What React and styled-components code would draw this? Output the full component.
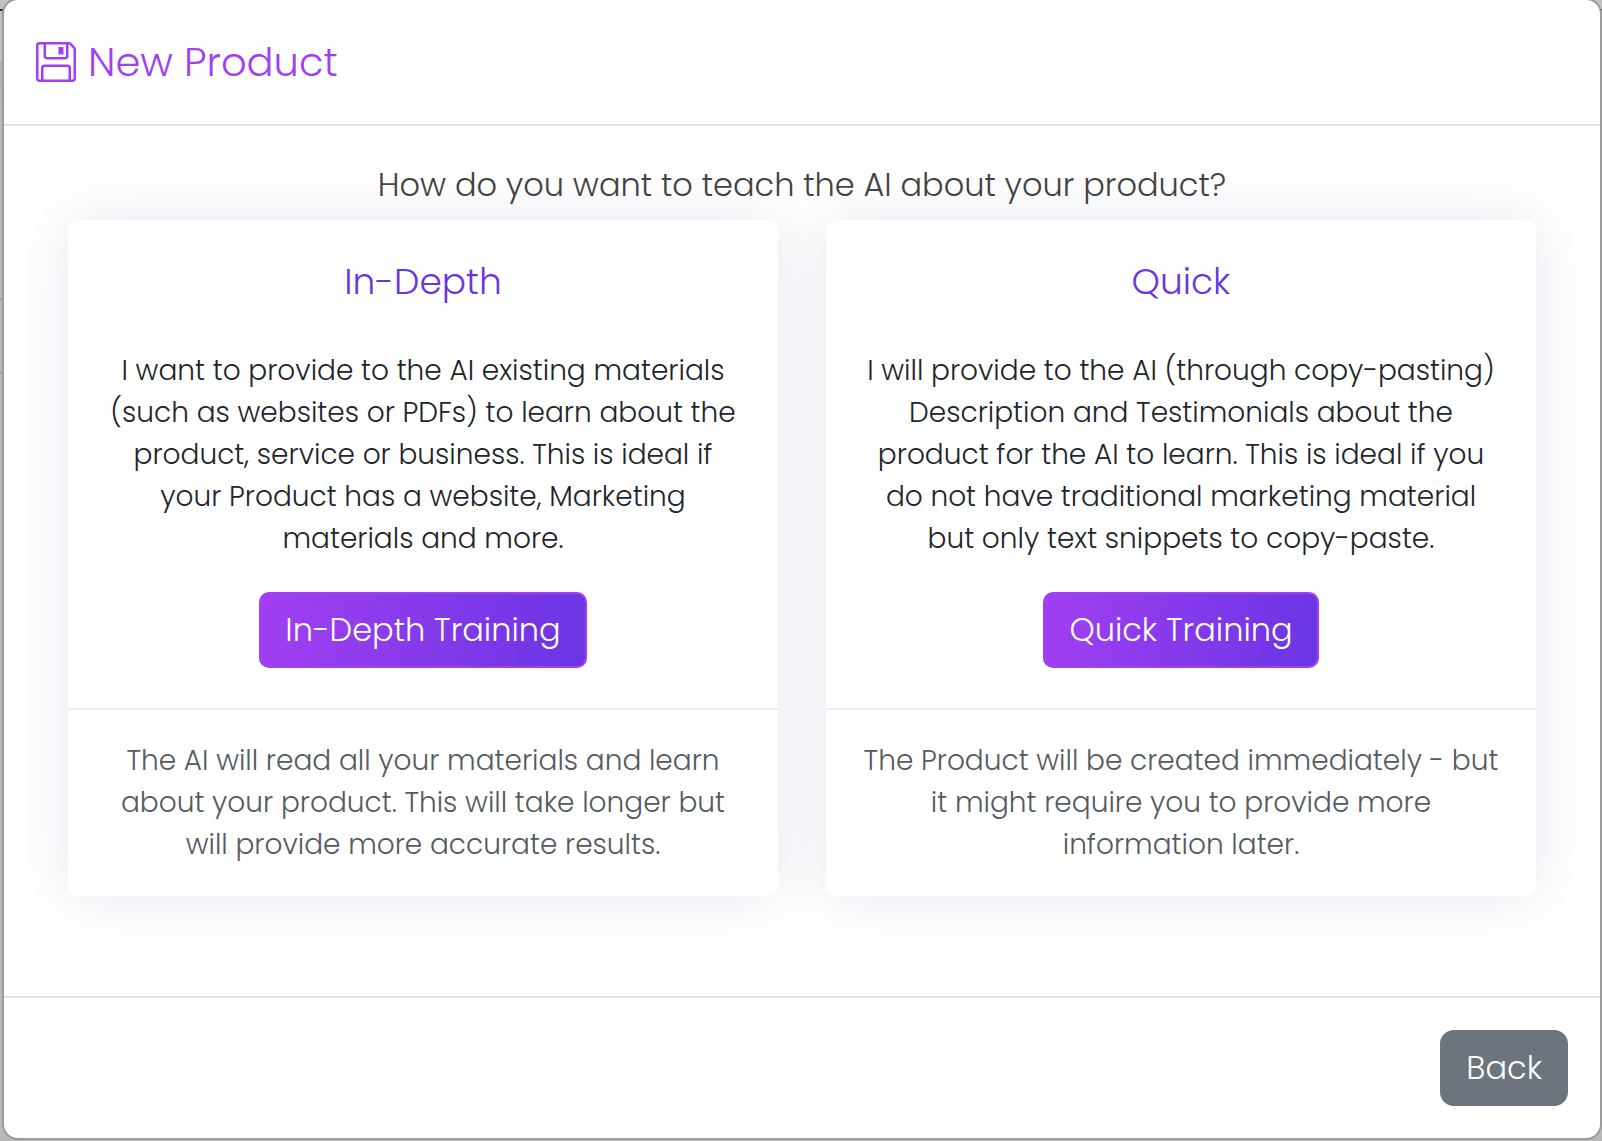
import React from "react";
import styled, { createGlobalStyle } from "styled-components";
import { BsFloppy } from "react-icons/bs";

const GlobalStyle = createGlobalStyle`
  *, *::before, *::after { box-sizing: border-box; }
  body {
    margin: 0;
    background: #b9b9b9;
    color: #212529;
    font-family: Poppins, Inter, "Liberation Sans", sans-serif;
    font-size: 28px;
    font-weight: 300;
    line-height: 42px;
  }
`;

const Backdrop = styled.div`
  display: flow-root;
  min-height: 100vh;
  padding-left: 2px;
  background: linear-gradient(
    #c0c0c0 9px, #2b2b2b 9px 11px, #c0c0c0 11px 62px,
    #b0b0b0 62px, #b9b9b9 100px 298px, #a0a0a3 298px 300px,
    #b9b9b9 300px 372px, #a0a0a3 372px 374px, #b9b9b9 374px
  );
`;

const Dialog = styled.section`
  margin-top: -2px;
  background: #fff;
  border: 2px solid #9b9b9b;
  border-radius: 16px;
  overflow: hidden;
`;

const Header = styled.header`
  display: flex;
  align-items: center;
  gap: 12px;
  padding: 32px;
  border-bottom: 2px solid #dee2e6;
  color: #a13ff2;
`;

const Title = styled.h1`
  margin: 0;
  font-size: 40px;
  font-weight: 300;
  line-height: 60px;
`;

const Body = styled.main`
  padding: 40px 64px 100px;
`;

const Question = styled.h2`
  margin: 0 0 16px;
  color: #444;
  font-size: 32px;
  font-weight: 300;
  line-height: 38px;
  text-align: center;
`;

const Options = styled.div`
  display: grid;
  grid-template-columns: repeat(2, minmax(0, 1fr));
  gap: 48px;
`;

const Card = styled.article`
  display: flex;
  flex-direction: column;
  border-radius: 10px;
  background: #fff;
  box-shadow: 0 0 60px rgba(1, 41, 112, 0.1);
  text-align: center;
`;

const CardBody = styled.div`
  flex: 1;
  padding: 40px 36px;
`;

const CardTitle = styled.h3`
  margin: 0 0 46px;
  color: #6a35e3;
  font-size: 36px;
  font-weight: 300;
  line-height: 44px;
`;

const CardText = styled.p`
  margin: 0 0 32px;
`;

const CardFooter = styled.footer`
  padding: 30px 36px;
  border-top: 2px solid #ebeef4;
  color: #555a5f;
`;

const Button = styled.button`
  padding: 12px 24px;
  border: 2px solid #6c757d;
  border-radius: 14px;
  background: #6c757d;
  color: #fff;
  font: inherit;
  font-size: 32px;
  line-height: 48px;
`;

const PrimaryButton = styled(Button)`
  border-color: #a13ff2;
  border-radius: 10px;
  background: linear-gradient(95deg, #a13ff2, #6a35e3) padding-box, #a13ff2;
`;

const Footer = styled.footer`
  display: flex;
  justify-content: flex-end;
  padding: 32px;
  border-top: 2px solid #dee2e6;
`;

const options = [
  {
    title: "In-Depth",
    text: "I want to provide to the AI existing materials (such as websites or PDFs) to learn about the product, service or business. This is ideal if your Product has a website, Marketing materials and more.",
    action: "In-Depth Training",
    note: "The AI will read all your materials and learn about your product. This will take longer but will provide more accurate results.",
  },
  {
    title: "Quick",
    text: "I will provide to the AI (through copy-pasting) Description and Testimonials about the product for the AI to learn. This is ideal if you do not have traditional marketing material but only text snippets to copy-paste.",
    action: "Quick Training",
    note: "The Product will be created immediately - but it might require you to provide more information later.",
  },
];

export default function App() {
  return (
    <Backdrop>
      <GlobalStyle />
      <Dialog role="dialog" aria-labelledby="dialog-title">
        <Header>
          <BsFloppy size={40} aria-hidden="true" />
          <Title id="dialog-title">New Product</Title>
        </Header>
        <Body>
          <Question>How do you want to teach the AI about your product?</Question>
          <Options>
            {options.map((option) => (
              <Card key={option.title}>
                <CardBody>
                  <CardTitle>{option.title}</CardTitle>
                  <CardText>{option.text}</CardText>
                  <PrimaryButton type="button">{option.action}</PrimaryButton>
                </CardBody>
                <CardFooter>{option.note}</CardFooter>
              </Card>
            ))}
          </Options>
        </Body>
        <Footer>
          <Button type="button">Back</Button>
        </Footer>
      </Dialog>
    </Backdrop>
  );
}
